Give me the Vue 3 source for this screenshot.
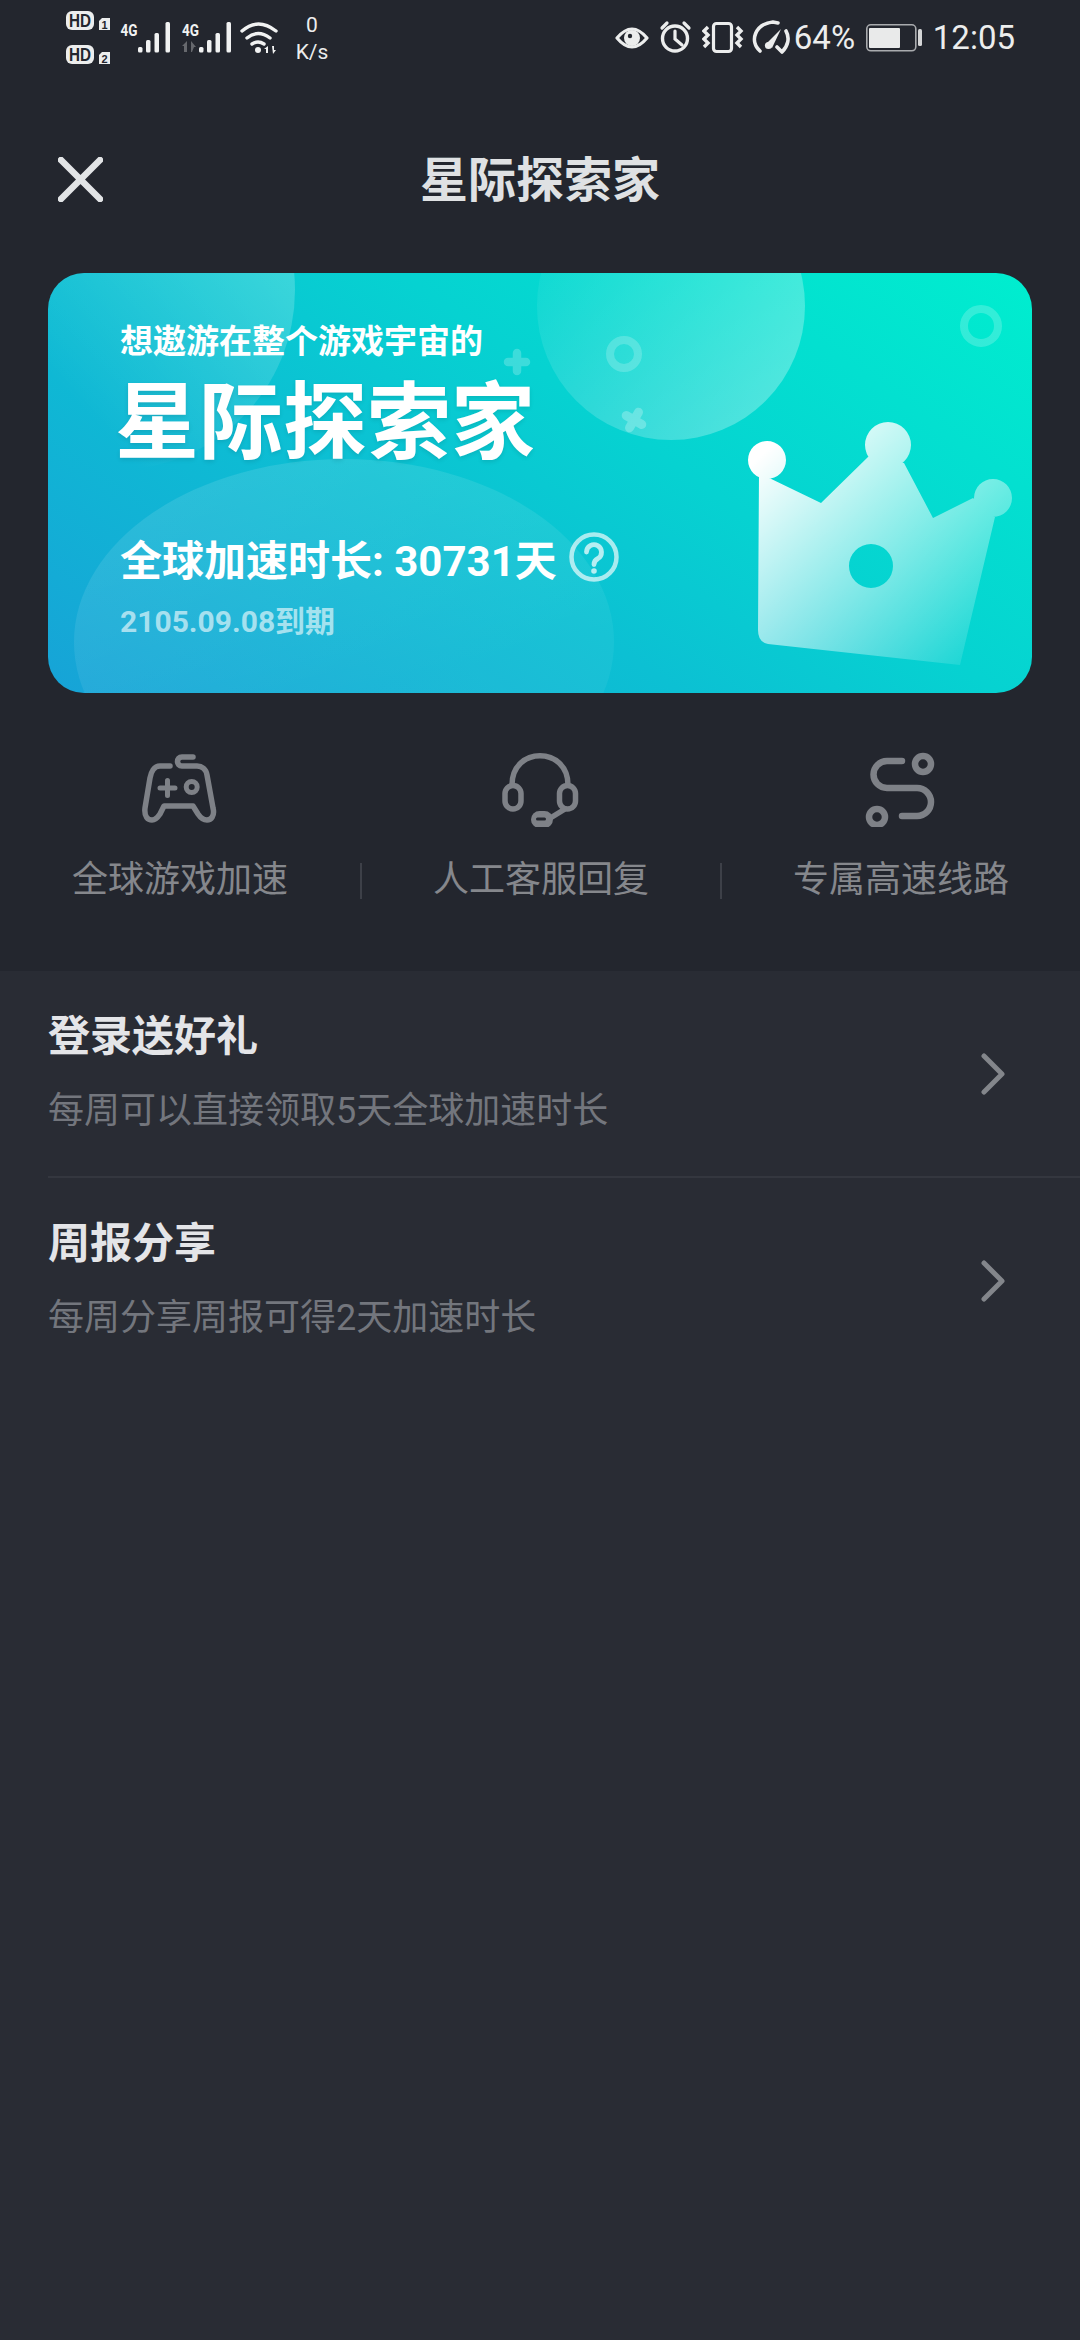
<template>
  <div class="page">
    <div class="top">
      <div class="status">
        <svg class="sb sims" viewBox="65 0 46 76" width="46" height="76">
          <rect x="66" y="11" width="28" height="19" rx="6" fill="#eceded" />
          <text x="80" y="27" class="hd" text-anchor="middle" textLength="22" lengthAdjust="spacingAndGlyphs">HD</text>
          <path d="M99 21 l3-3 h8 v12 h-11z" fill="#eceded" />
          <text x="104.500" y="28.500" class="simn" text-anchor="middle">1</text>
          <rect x="66" y="45" width="28" height="19" rx="6" fill="#eceded" />
          <text x="80" y="61" class="hd" text-anchor="middle" textLength="22" lengthAdjust="spacingAndGlyphs">HD</text>
          <path d="M99 55 l3-3 h8 v12 h-11z" fill="#eceded" />
          <text x="104.500" y="62.500" class="simn" text-anchor="middle">2</text>
        </svg>
        <svg class="sb signal" viewBox="120 0 113 76" width="113" height="76">
          <text x="120.500" y="36" class="g4" textLength="17" lengthAdjust="spacingAndGlyphs">4G</text>
          <g fill="#f1f2f2">
            <rect x="138" y="47" width="4.500" height="5.500" rx="1.500" />
            <rect x="146" y="40" width="4.500" height="12.500" rx="1.500" />
            <rect x="154.500" y="33" width="4.500" height="19.500" rx="1.500" />
            <rect x="165.500" y="22" width="4.500" height="30.500" rx="1.500" />
          </g>
          <text x="182" y="36" class="g4" textLength="17" lengthAdjust="spacingAndGlyphs">4G</text>
          <path d="M187 41 v11 h-3 v-6 h-2 z M191 41 l5 6 h-2 l-2 5 h-1 z" fill="#66686d" />
          <g fill="#f1f2f2">
            <rect x="199" y="47" width="4.500" height="5.500" rx="1.500" />
            <rect x="207" y="40" width="4.500" height="12.500" rx="1.500" />
            <rect x="215.500" y="33" width="4.500" height="19.500" rx="1.500" />
            <rect x="226.500" y="22" width="4.500" height="30.500" rx="1.500" />
          </g>
        </svg>
        <svg class="sb wifi" viewBox="240 0 38 76" width="38" height="76">
          <g fill="none" stroke="#f1f2f2" stroke-width="3.400" stroke-linecap="round">
            <path d="M242 31 Q258 17 276 31" />
            <path d="M247 38 Q258 29 270 38" />
            <path d="M252 44 Q258 40 264 44" />
          </g>
          <circle cx="258" cy="50" r="3" fill="#f1f2f2" />
          <path d="M268 46 v7 h-2 v-4 h-2z M272 46 h2 v4 h2 l-3 4z" fill="#f1f2f2" />
        </svg>
        <div class="speed"><span>0</span><span>K/s</span></div>
        <div class="grow"></div>
        <svg class="sb" viewBox="615 0 34 76" width="34" height="76">
          <path d="M617 38 Q632 20 647 38 Q632 56 617 38Z" fill="none" stroke="#eceded" stroke-width="3.200" stroke-linejoin="round" />
          <circle cx="632" cy="38" r="8" fill="#eceded" />
          <circle cx="630" cy="36" r="2.200" fill="#23262e" />
        </svg>
        <svg class="sb icon-gap" viewBox="659 0 33 76" width="33" height="76">
          <circle cx="675" cy="38.500" r="12.500" fill="none" stroke="#eceded" stroke-width="3.400" />
          <path d="M675 31 V39 L682 45 M662 28 L667 23 M689 28 L684 23" fill="none" stroke="#eceded" stroke-width="3.200" stroke-linecap="round" />
        </svg>
        <svg class="sb icon-gap" viewBox="701 0 42 76" width="42" height="76">
          <rect x="712.500" y="23.500" width="18" height="28" rx="3" fill="none" stroke="#eceded" stroke-width="3.200" />
          <path d="M707 27 L703 31 L707 35 L703 39 L707 43 L703 47 M736 27 L740 31 L736 35 L740 39 L736 43 L740 47" fill="none" stroke="#eceded" stroke-width="3.400" />
        </svg>
        <svg class="sb icon-gap-s" viewBox="751 0 38 76" width="38" height="76">
          <path d="M759 51 C748 41 754 24 772 22 L777 23" fill="none" stroke="#eceded" stroke-width="3.600" stroke-linecap="round" />
          <path d="M785 31 C789 38 787 46 781 52 L776 47" fill="none" stroke="#eceded" stroke-width="3.600" stroke-linecap="round" stroke-linejoin="round" />
          <path d="M766 43 L780 29 L771 48 Z" fill="#eceded" />
          <circle cx="767.500" cy="45.500" r="3.600" fill="#eceded" />
        </svg>
        <span class="sbtext pct">64%</span>
        <svg class="sb bat" viewBox="865 0 57 76" width="57" height="76">
          <rect x="865.800" y="24.800" width="49" height="26" rx="4" fill="none" stroke="#a9abae" stroke-width="1.600" />
          <rect x="868" y="28" width="31" height="20" rx="1" fill="#e9eaea" />
          <rect x="917" y="29" width="4" height="17" rx="1.500" fill="#d4d5d6" />
        </svg>
        <span class="sbtext time">12:05</span>
      </div>

      <header class="head">
        <svg class="close" viewBox="0 0 45 45" width="45" height="45">
          <path d="M3 3 L42 42 M42 3 L3 42" stroke="#e2e4e6" stroke-width="6.500" stroke-linecap="round" />
        </svg>
        <h1>星际探索家</h1>
        <span></span>
      </header>

      <section class="banner">
        <svg class="deco" viewBox="48 273 984 420" width="984" height="420">
          <defs>
            <linearGradient id="blob1" gradientUnits="userSpaceOnUse" x1="290" y1="275" x2="110" y2="440">
              <stop offset="0" stop-color="#fff" stop-opacity=".2" />
              <stop offset="1" stop-color="#fff" stop-opacity="0" />
            </linearGradient>
            <linearGradient id="blob2" gradientUnits="userSpaceOnUse" x1="540" y1="250" x2="790" y2="420">
              <stop offset="0" stop-color="#fff" stop-opacity=".04" />
              <stop offset="1" stop-color="#fff" stop-opacity=".32" />
            </linearGradient>
            <linearGradient id="blob3" gradientUnits="userSpaceOnUse" x1="300" y1="460" x2="360" y2="693">
              <stop offset="0" stop-color="#fff" stop-opacity=".11" />
              <stop offset="1" stop-color="#fff" stop-opacity=".05" />
            </linearGradient>
            <linearGradient id="crown" gradientUnits="userSpaceOnUse" x1="767" y1="450" x2="975" y2="670">
              <stop offset="0" stop-color="#fff" />
              <stop offset="1" stop-color="#fff" stop-opacity=".06" />
            </linearGradient>
          </defs>
          <circle cx="115" cy="290" r="180" fill="url(#blob1)" />
          <circle cx="671" cy="306" r="134" fill="url(#blob2)" />
          <ellipse cx="344" cy="642" rx="270" ry="183" fill="url(#blob3)" />
          <path d="M517 353 V371 M508 362 H526" stroke="#fff" stroke-opacity=".22" stroke-width="8.500" stroke-linecap="round" />
          <circle cx="624" cy="354" r="14" fill="none" stroke="#fff" stroke-opacity=".2" stroke-width="8" />
          <circle cx="981" cy="326" r="17" fill="none" stroke="#fff" stroke-opacity=".2" stroke-width="8" />
          <path d="M625 420 H643 M634 411 V429" transform="rotate(30 634 420)" stroke="#fff" stroke-opacity=".25" stroke-width="9" stroke-linecap="round" />
          <path
            fill="url(#crown)"
            d="M759 473 L821 503 L868 457 L904 463 L933 518 L973 498 L995 517 L960 665 L768 644 Q758 642 758 630 Z
               M748 460 a19 19 0 1 1 38 0 a19 19 0 1 1 -38 0 Z
               M865 445 a23 23 0 1 1 46 0 a23 23 0 1 1 -46 0 Z
               M974 498 a19 19 0 1 1 38 0 a19 19 0 1 1 -38 0 Z
               M893 566 a22 22 0 1 0 -44 0 a22 22 0 1 0 44 0 Z"
          />
        </svg>
        <div class="banner-body">
          <p class="sub">想遨游在整个游戏宇宙的</p>
          <h2>星际探索家</h2>
          <div class="time-left">
            <span>全球加速时长: 30731天</span>
            <svg viewBox="0 0 50 50" width="50" height="50">
              <circle cx="25" cy="25" r="22.500" fill="none" stroke="#fff" stroke-opacity=".65" stroke-width="4.500" />
              <path d="M17.500 20 a7.500 7.500 0 1 1 11.500 6.500 q-4 2 -4 6" fill="none" stroke="#fff" stroke-opacity=".7" stroke-width="4.800" stroke-linecap="round" />
              <circle cx="25" cy="39" r="2.800" fill="#fff" fill-opacity=".7" />
            </svg>
          </div>
          <p class="expire">2105.09.08到期</p>
        </div>
      </section>

      <div class="features">
        <div class="feature">
          <svg viewBox="0 0 80 76" width="80" height="76">
            <path d="M30 15 H20 C14 15 11 21 10 27 L5 57 C4 66 8 69 12 69 C16 69 18 66 20 63 L24 55 H53 L58 63 C60 66 63 69 67 69 C71 69 75 65 73 57 L67 24 C66 18 62 15 57 15 H42 C36 15 36 6 42 6 H53" fill="none" stroke="#7e8187" stroke-width="5.500" stroke-linecap="round" stroke-linejoin="round" />
            <path d="M20 37 H35 M27.500 29.500 V44.500" stroke="#7e8187" stroke-width="5" stroke-linecap="round" />
            <circle cx="51.700" cy="36" r="5.500" fill="none" stroke="#7e8187" stroke-width="5" />
          </svg>
          <div class="label">全球游戏加速</div>
        </div>
        <div class="feature">
          <svg viewBox="0 0 80 76" width="80" height="76">
            <g fill="none" stroke="#7e8187" stroke-width="5.500" stroke-linecap="round">
              <path d="M12 34 C12 -5 68 -5 68 34" />
              <rect x="5" y="34.500" width="16" height="23.500" rx="8" />
              <rect x="59.500" y="34.500" width="16" height="23.500" rx="8" />
              <path d="M65 58 L52 66" />
            </g>
            <rect x="31" y="60" width="22" height="17" rx="8.500" fill="#7e8187" />
            <rect x="36" y="66.500" width="10" height="3" rx="1.500" fill="#23262e" />
          </svg>
          <div class="label">人工客服回复</div>
        </div>
        <div class="feature">
          <svg viewBox="0 0 80 76" width="80" height="76">
            <g fill="none" stroke="#7e8187" stroke-width="6.500" stroke-linecap="round">
              <path d="M42 10 H27 a13.500 13.500 0 0 0 0 27 H57 a14 14 0 0 1 0 28 H42" />
              <circle cx="63" cy="13" r="8" />
              <circle cx="17" cy="66" r="8" />
            </g>
          </svg>
          <div class="label">专属高速线路</div>
        </div>
      </div>
    </div>

    <div class="list">
      <div v-for="row in rows" :key="row.title" class="row">
        <div class="row-text">
          <div class="row-title">{{ row.title }}</div>
          <div class="row-sub">{{ row.sub }}</div>
        </div>
        <svg class="chev" viewBox="0 0 25 42" width="25" height="42">
          <path d="M3 3 L21 21 L3 39" fill="none" stroke="#83868b" stroke-width="5" stroke-linecap="round" stroke-linejoin="round" />
        </svg>
      </div>
    </div>
  </div>
</template>

<script setup>
const rows = [
  { title: '登录送好礼', sub: '每周可以直接领取5天全球加速时长' },
  { title: '周报分享', sub: '每周分享周报可得2天加速时长' }
]
</script>

<style>
html, body { margin: 0; background: #292c34; }
</style>

<style scoped>
.page {
  width: 1080px;
  min-height: 2340px;
  background: #292c34;
  font-family: Roboto, "Noto Sans CJK SC", sans-serif;
  overflow: hidden;
}
.top { background: #23262e; height: 971px; }

.status {
  display: flex;
  height: 76px;
  padding: 0 65px 0 65px;
  color: #eceded;
}
.sb { display: block; flex: none; }
.signal { margin-left: 9px; }
.wifi { margin-left: 7px; }
.hd { font: 700 18px "Liberation Sans", sans-serif; fill: #23262e; }
.simn { font: 700 11px "Liberation Sans", sans-serif; fill: #23262e; }
.g4 { font: 700 17px "Roboto", sans-serif; fill: #f1f2f2; }
.speed {
  display: flex;
  flex-direction: column;
  align-items: center;
  width: 34px;
  margin-left: 17px;
  padding-top: 12px;
  font-size: 21px;
  line-height: 27px;
}
.grow { flex: 1; }
.icon-gap { margin-left: 10px; }
.icon-gap-s { margin-left: 8px; }
.sbtext { font-size: 33px; line-height: 76px; }
.pct { margin-left: 4px; width: 72px; }
.time { margin-left: 10px; }

.head {
  display: grid;
  grid-template-columns: 1fr auto 1fr;
  align-items: center;
  height: 128px;
  margin: 39px 0 30px;
  padding: 0 58px;
}
.head h1 {
  margin: 0;
  padding-bottom: 7px;
  font-size: 48px;
  font-weight: 700;
  color: #dfe1e3;
}
.close { display: block; }

.banner {
  position: relative;
  width: 984px;
  height: 420px;
  margin: 0 48px;
  border-radius: 36px;
  overflow: hidden;
  background: linear-gradient(35deg, #17a3d7 0%, #0cc0d3 40%, #06d2d1 60%, #00eecf 100%);
}
.deco { position: absolute; left: 0; top: 0; }
.banner-body {
  position: relative;
  padding: 47px 0 0 72px;
  color: #fff;
}
.sub {
  margin: 0;
  font-size: 33px;
  line-height: 44px;
  font-weight: 700;
}
.banner-body h2 {
  margin: 10px 0 0 -5px;
  font-size: 84px;
  line-height: 100px;
  font-weight: 700;
  text-shadow: 0 2px 4px rgba(0, 0, 0, .1);
}
.time-left {
  display: flex;
  align-items: center;
  gap: 12px;
  height: 60px;
  margin-top: 53px;
  font-size: 42px;
  font-weight: 700;
}
.expire {
  margin: 15px 0 0;
  font-size: 30px;
  line-height: 40px;
  font-weight: 700;
  color: rgba(255, 255, 255, .6);
}

.features {
  display: grid;
  grid-template-columns: repeat(3, 360px);
  padding-top: 58px;
}
.feature {
  display: flex;
  flex-direction: column;
  align-items: center;
}
.feature svg { display: block; }
.label {
  width: 100%;
  height: 36px;
  margin-top: 36px;
  font-size: 36px;
  line-height: 34px;
  text-align: center;
  color: #85878c;
}
.feature + .feature .label {
  box-sizing: border-box;
  border-left: 2px solid #3d4048;
}

.list { padding-left: 48px; }
.row {
  display: flex;
  align-items: center;
  height: 205px;
  padding-right: 74px;
  box-sizing: border-box;
}
.row + .row {
  height: 207px;
  border-top: 2px solid #34373f;
}
.row-text { flex: 1; padding-bottom: 4px; }
.row-title {
  font-size: 42px;
  line-height: 60px;
  font-weight: 700;
  color: #e4e5e8;
}
.row-sub {
  margin-top: 19px;
  font-size: 36px;
  line-height: 50px;
  color: #73767d;
}
.chev { display: block; }
</style>
